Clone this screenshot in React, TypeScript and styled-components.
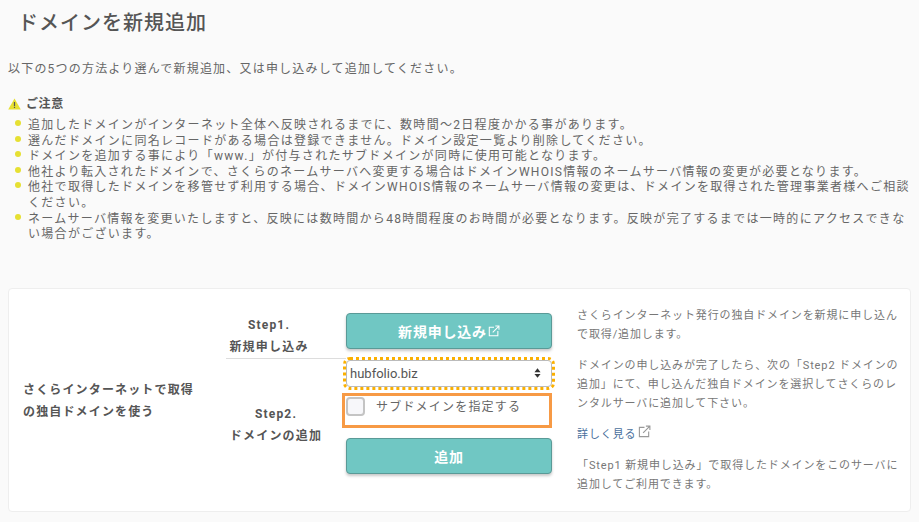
import React from "react";
import styled, { createGlobalStyle } from "styled-components";

const Global = createGlobalStyle`
  html, body { margin: 0; padding: 0; background: #fafafa; }
  body { width: 919px; height: 522px; overflow: hidden; font-family: "Roboto", "Noto Sans CJK JP", sans-serif; color: #666; }
`;
const Page = styled.div`
  padding: 9px 8px 0;
  height: 513px;
  box-sizing: border-box;
`;
const Title = styled.h1`
  margin: 0 0 0 10px;
  font-size: 20px;
  line-height: 28px;
  font-weight: 500;
  letter-spacing: 1px;
  color: #555;
`;
const Intro = styled.p`
  margin: 23px 0 0;
  font-size: 12px;
  line-height: 18px;
  letter-spacing: 1.2px;
  color: #666;
`;
const NoticeHead = styled.div`
  display: flex;
  align-items: center;
  gap: 5px;
  margin-top: 17px;
  font-size: 12px;
  line-height: 18px;
  font-weight: 700;
  letter-spacing: 0.6px;
  color: #555;
`;
const Notes = styled.ul`
  margin: 5px 0 0;
  padding: 0 0 0 20px;
  max-width: 882px;
  list-style: none;
`;
const Note = styled.li`
  position: relative;
  font-size: 12px;
  line-height: 15.6px;
  letter-spacing: 1.3px;
  color: #666;
  &::before {
    content: "";
    position: absolute;
    left: -13px;
    top: 2px;
    width: 6px;
    height: 6px;
    border-radius: 50%;
    background: #e6e032;
  }
`;
const Card = styled.section`
  display: flex;
  margin-top: 45px;
  height: 224px;
  box-sizing: border-box;
  background: #fff;
  border: 1px solid #eee;
  border-radius: 4px;
`;
const LeadCol = styled.div`
  width: 217px;
  flex: none;
  box-sizing: border-box;
  padding: 2px 0 0 14px;
  display: flex;
  align-items: center;
  font-size: 12px;
  line-height: 22px;
  font-weight: 700;
  letter-spacing: 1.15px;
  color: #555;
`;
const Steps = styled.div`
  width: 331px;
  flex: none;
  display: flex;
  flex-direction: column;
`;
const StepRow = styled.div<{ $divided?: boolean }>`
  display: flex;
  box-sizing: border-box;
  height: ${(p) => (p.$divided ? 70 : 154)}px;
`;
const StepLabel = styled.div<{ $divided?: boolean; $padRight: number; $pad: number }>`
  width: 120px;
  flex: none;
  box-sizing: border-box;
  height: ${(p) => (p.$divided ? 70 : 100)}px;
  border-bottom: ${(p) => (p.$divided ? "1px solid #ddd" : "none")};
  padding-top: ${(p) => p.$pad}px;
  padding-right: ${(p) => p.$padRight}px;
  text-align: center;
  font-size: 12px;
  line-height: 22px;
  font-weight: 700;
  letter-spacing: 1.2px;
  color: #555;
  white-space: nowrap;
`;
const StepAction = styled.div`
  width: 206px;
  flex: none;
  display: flex;
  flex-direction: column;
`;
const TealButton = styled.button<{ $top: number }>`
  display: flex;
  align-items: center;
  justify-content: center;
  gap: 1px;
  width: 206px;
  height: 36px;
  margin-top: ${(p) => p.$top}px;
  padding: 0;
  border: 1px solid #5a9a97;
  border-radius: 4px;
  background: #70c7c3;
  box-shadow: 0 2px 3px rgba(0, 0, 0, 0.22);
  color: #fff;
  font: 700 14px "Roboto", "Noto Sans CJK JP", sans-serif;
  letter-spacing: 0.8px;
`;
const SelectWrap = styled.div`
  margin-top: 1px;
  outline: 3px dotted #fbb000;
  outline-offset: 0;
  height: 27px;
  box-sizing: border-box;
  display: flex;
  align-items: center;
  justify-content: space-between;
  padding: 0 10px 0 3px;
  border: 1px solid #bbb;
  border-radius: 4px;
  background: #fff;
  font-size: 13px;
  color: #555;
`;
const SubdomainBox = styled.label`
  display: flex;
  align-items: flex-start;
  gap: 11px;
  box-sizing: border-box;
  width: 210px;
  height: 35px;
  margin: 6px 0 0 -4px;
  padding: 1px 0 0 1px;
  border: 3px solid #f79a45;
  font-size: 12px;
  letter-spacing: 1.2px;
  color: #666;
`;
const CheckMark = styled.span`
  flex: none;
  box-sizing: border-box;
  width: 19px;
  height: 19px;
  border: 2px solid #c4c4c4;
  border-radius: 4px;
  background: #f7f7fa;
`;
const CheckText = styled.span`
  line-height: 18px;
  margin-top: 1px;
`;
const Help = styled.div`
  width: 344px;
  flex: none;
  box-sizing: border-box;
  padding: 17px 0 0 20px;
  font-size: 11px;
  line-height: 19px;
  letter-spacing: 0.88px;
  color: #777;
`;
const HelpP = styled.p`
  margin: 0 0 12px;
`;
const HelpLink = styled.a`
  color: #4a6f9c;
  display: inline-flex;
  align-items: flex-start;
  gap: 2px;
`;

const ExtIcon = ({ size, color }: { size: number; color: string }) => (
  <svg width={size} height={size} viewBox="0 0 14 14" fill="none" stroke={color} strokeWidth="1.2">
    <path d="M7 2.5H1.5v10h10V7" />
    <path d="M5.5 8.5 12.5 1.5M8.5 1.2h4.3v4.3" />
  </svg>
);

const WarnIcon = () => (
  <svg width="13" height="12" viewBox="0 0 13 12">
    <path d="M6.5 0.5 12.8 11.5H0.2Z" fill="#e6e032" />
    <path d="M5.9 4h1.2v4H5.9zM5.9 8.8h1.2v1.2H5.9z" fill="#555" />
  </svg>
);

const SortIcon = () => (
  <svg width="7" height="12" viewBox="0 0 8 12" fill="#333">
    <path d="M4 0.5 7.5 5H0.5ZM4 11.5 0.5 7H7.5Z" />
  </svg>
);

const notes = [
  "追加したドメインがインターネット全体へ反映されるまでに、数時間〜2日程度かかる事があります。",
  "選んだドメインに同名レコードがある場合は登録できません。ドメイン設定一覧より削除してください。",
  "ドメインを追加する事により「www.」が付与されたサブドメインが同時に使用可能となります。",
  "他社より転入されたドメインで、さくらのネームサーバへ変更する場合はドメインWHOIS情報のネームサーバ情報の変更が必要となります。",
  "他社で取得したドメインを移管せず利用する場合、ドメインWHOIS情報のネームサーバ情報の変更は、ドメインを取得された管理事業者様へご相談ください。",
  "ネームサーバ情報を変更いたしますと、反映には数時間から48時間程度のお時間が必要となります。反映が完了するまでは一時的にアクセスできない場合がございます。",
];

export default function App() {
  return (
    <Page>
      <Global />
      <Title>ドメインを新規追加</Title>
      <Intro>以下の5つの方法より選んで新規追加、又は申し込みして追加してください。</Intro>
      <NoticeHead>
        <WarnIcon />
        ご注意
      </NoticeHead>
      <Notes>
        {notes.map((n) => (
          <Note key={n}>{n}</Note>
        ))}
      </Notes>
      <Card>
        <LeadCol>
          <div>
            さくらインターネットで取得
            <br />
            の独自ドメインを使う
          </div>
        </LeadCol>
        <Steps>
          <StepRow $divided>
            <StepLabel $divided $padRight={34} $pad={25}>
              Step1.
              <br />
              新規申し込み
            </StepLabel>
            <StepAction>
              <TealButton $top={24}>
                新規申し込み
                <ExtIcon size={12} color="#fff" />
              </TealButton>
            </StepAction>
          </StepRow>
          <StepRow>
            <StepLabel $padRight={20} $pad={44}>
              Step2.
              <br />
              ドメインの追加
            </StepLabel>
            <StepAction>
              <SelectWrap>
                hubfolio.biz
                <SortIcon />
              </SelectWrap>
              <SubdomainBox>
                <CheckMark />
                <CheckText>サブドメインを指定する</CheckText>
              </SubdomainBox>
              <TealButton $top={10}>追加</TealButton>
            </StepAction>
          </StepRow>
        </Steps>
        <Help>
          <HelpP>さくらインターネット発行の独自ドメインを新規に申し込んで取得/追加します。</HelpP>
          <HelpP>ドメインの申し込みが完了したら、次の「Step2 ドメインの追加」にて、申し込んだ独自ドメインを選択してさくらのレンタルサーバに追加して下さい。</HelpP>
          <HelpP>
            <HelpLink>
              詳しく見る
              <ExtIcon size={13} color="#999" />
            </HelpLink>
          </HelpP>
          <HelpP>「Step1 新規申し込み」で取得したドメインをこのサーバに追加してご利用できます。</HelpP>
        </Help>
      </Card>
    </Page>
  );
}
